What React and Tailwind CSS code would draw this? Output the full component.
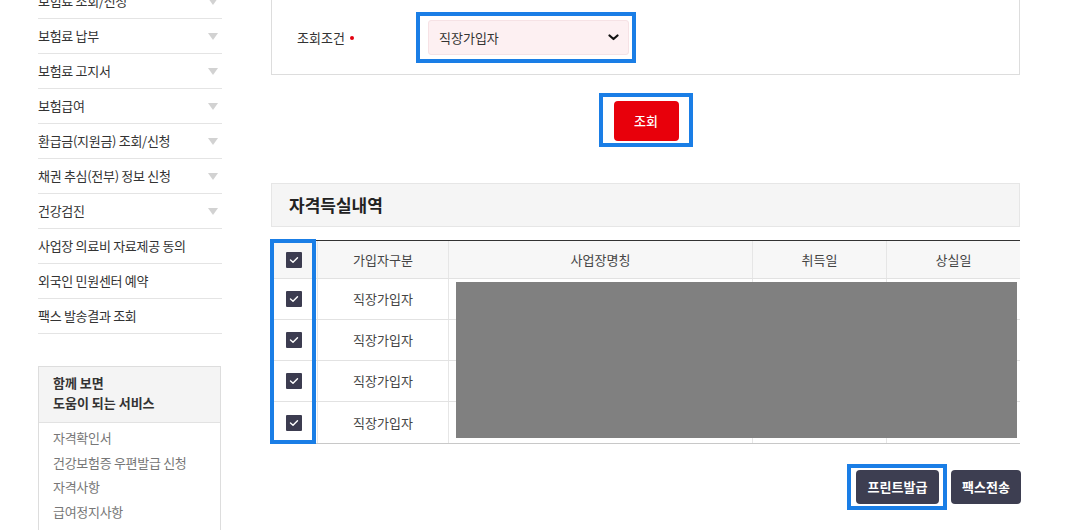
import React from "react";

const menu = [
  ["보험료 조회/신청", true],
  ["보험료 납부", true],
  ["보험료 고지서", true],
  ["보험급여", true],
  ["환급금(지원금) 조회/신청", true],
  ["채권 추심(전부) 정보 신청", true],
  ["건강검진", true],
  ["사업장 의료비 자료제공 동의", false],
  ["외국인 민원센터 예약", false],
  ["팩스 발송결과 조회", false],
];

const services = ["자격확인서", "건강보험증 우편발급 신청", "자격사항", "급여정지사항"];

function Check() {
  return (
    <div className="w-[16px] h-[16px] bg-[#3c3c50] rounded-[1px] flex items-center justify-center">
      <svg width="10" height="8" viewBox="0 0 10 8">
        <polyline points="1.5,4 4,6.3 8.5,1.7" fill="none" stroke="#ffffff" strokeWidth="1.4" strokeLinecap="round" strokeLinejoin="round" />
      </svg>
    </div>
  );
}

function Tri() {
  return (
    <svg width="10" height="7" viewBox="0 0 10 7">
      <polygon points="0,0 10,0 5,7" fill="#d2d2d2" />
    </svg>
  );
}

export default function App() {
  const rows = [0, 1, 2, 3];
  return (
    <div className="w-[1069px] h-[530px] overflow-hidden bg-white font-['Noto_Sans_CJK_KR',sans-serif] text-[#333]">
      <div className="flex pl-[38px] gap-[49px]">
        {/* Sidebar */}
        <div className="w-[184px] shrink-0 -mt-[16px]">
          {menu.map(([t, arrow]) => (
            <div key={t} className="h-[35px] border-b border-[#e4e4e4] flex items-center justify-between pr-[4px] text-[13px] text-[#333] tracking-[-0.3px]">
              <span>{t}</span>
              {arrow && <Tri />}
            </div>
          ))}
          <div className="mt-[32px] w-[183px] border border-[#dddddd]">
            <div className="bg-[#f4f4f4] px-[14px] pt-[6px] pb-[9px] border-b border-[#e2e2e2] text-[13px] font-bold leading-[20px] text-[#333]">
              <div>함께 보면</div>
              <div>도움이 되는 서비스</div>
            </div>
            <div className="px-[14px] pt-[3px] pb-[10px] text-[13px] leading-[24.6px] text-[#777] tracking-[-0.3px]">
              {services.map((s) => (
                <div key={s}>{s}</div>
              ))}
            </div>
          </div>
        </div>

        {/* Main */}
        <div className="w-[749px] shrink-0">
          <div className="border border-t-0 border-[#dddddd] pt-[12px] pb-[11px] flex items-center">
            <div className="w-[144px] pl-[25px] text-[13px] text-[#333] flex items-center">
              조회조건
              <span className="ml-[5px] w-[4px] h-[4px] rounded-full bg-[#e3000f]"></span>
            </div>
            <div className="border-4 border-[#1a7ee6] pl-[8px] pr-[3px] py-[4px] w-[220px] h-[51px]">
              <div className="h-[35px] bg-[#fdf0f2] border border-[#f6e2e5] rounded-[3px] flex items-center justify-between pl-[10px] pr-[9px]">
                <span className="text-[13px] text-[#333]">직장가입자</span>
                <svg width="11" height="7" viewBox="0 0 11 7">
                  <polyline points="1.5,1.5 5.5,5 9.5,1.5" fill="none" stroke="#111" strokeWidth="2.2" strokeLinecap="round" strokeLinejoin="round" />
                </svg>
              </div>
            </div>
          </div>

          <div className="flex justify-center mt-[18px]">
            <div className="border-4 border-[#1a7ee6] pl-[11px] pr-[10px] pt-[4px] pb-[2px] w-[94px] h-[54px]">
              <div className="w-[65px] h-[40px] bg-[#e8000b] rounded-[4px] flex items-center justify-center text-white text-[13px] font-medium">
                조회
              </div>
            </div>
          </div>

          <div className="mt-[36px] h-[44px] bg-[#f5f5f5] border border-[#e6e6e6] flex items-center pl-[17px] text-[17px] font-bold text-[#222]">
            자격득실내역
          </div>

          <div className="relative mt-[13px] border-t border-[#333] border-b border-b-[#c8c8c8]">
            <div className="grid grid-cols-[47px_131px_304px_134px_1fr] h-[38px] bg-[#f7f7f7] border-b border-[#e2e2e2] text-[13px] text-[#444]">
              <div className="flex items-center justify-center border-r border-[#e6e6e6]"><Check /></div>
              <div className="flex items-center justify-center border-r border-[#e6e6e6]">가입자구분</div>
              <div className="flex items-center justify-center border-r border-[#e6e6e6]">사업장명칭</div>
              <div className="flex items-center justify-center border-r border-[#e6e6e6]">취득일</div>
              <div className="flex items-center justify-center">상실일</div>
            </div>
            {rows.map((r) => (
              <div key={r} className={`grid grid-cols-[47px_131px_304px_134px_1fr] h-[41px] text-[13px] text-[#444] ${r < 3 ? "border-b border-[#e2e2e2]" : ""}`}>
                <div className="flex items-center justify-center border-r border-[#e6e6e6]"><Check /></div>
                <div className="flex items-center justify-center border-r border-[#e6e6e6]">직장가입자</div>
                <div className="border-r border-[#e6e6e6]"></div>
                <div className="border-r border-[#e6e6e6]"></div>
                <div></div>
              </div>
            ))}
            <div className="absolute left-[185px] top-[41px] w-[561px] h-[156px] bg-[#808080]"></div>
            <div className="absolute left-[-1px] top-[-2px] w-[46px] h-[205px] border-4 border-[#1a7ee6]"></div>
          </div>

          <div className="flex justify-end items-center gap-[4px] mt-[20px] mr-[-1px]">
            <div className="border-4 border-[#1a7ee6] pl-[5px] pr-[4px] py-[2px] w-[100px] h-[46px]">
              <div className="w-[83px] h-[34px] bg-[#3d3e51] rounded-[4px] flex items-center justify-center text-white text-[13px] font-semibold">
                프린트발급
              </div>
            </div>
            <div className="w-[70px] h-[34px] bg-[#3d3e51] rounded-[4px] flex items-center justify-center text-white text-[13px] font-semibold">
              팩스전송
            </div>
          </div>
        </div>
      </div>
    </div>
  );
}
